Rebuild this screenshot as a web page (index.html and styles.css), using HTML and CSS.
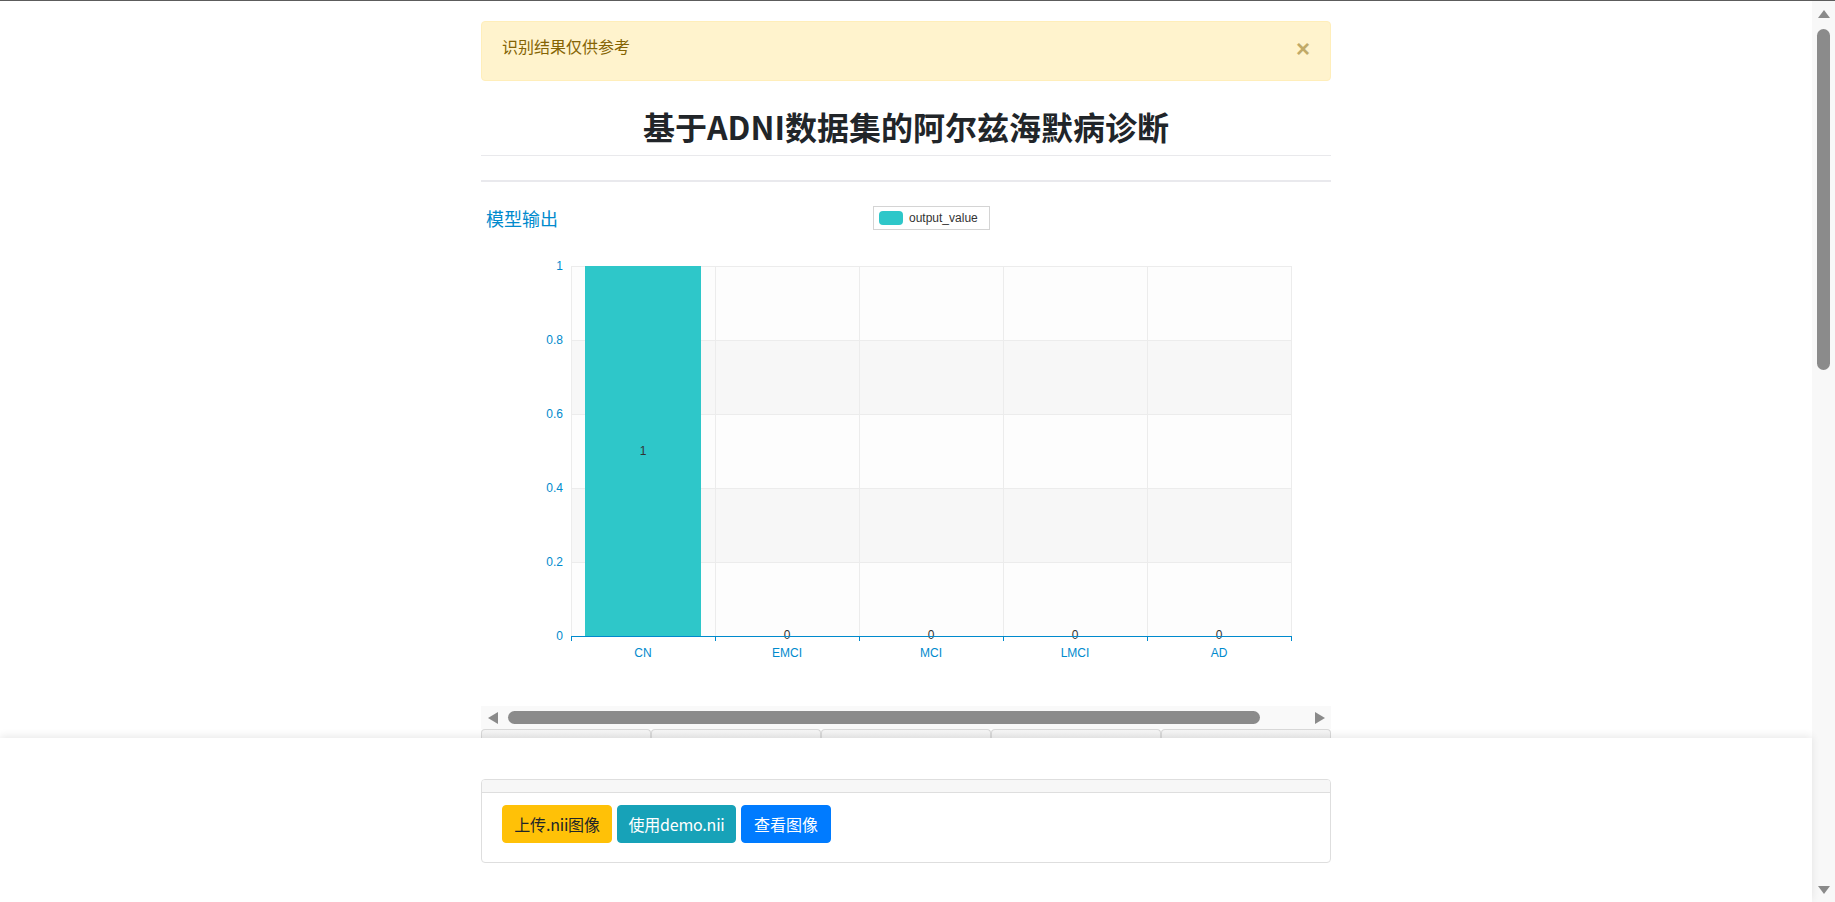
FILE: index.html
```html
<!DOCTYPE html>
<html lang="zh-CN">
<head>
<meta charset="utf-8">
<title>基于ADNI数据集的阿尔兹海默病诊断</title>
<link rel="stylesheet" href="styles.css">
</head>
<body>
<div class="viewport">
  <main class="page">
    <div class="container">
      <div class="alert">
        <span class="alert-text">识别结果仅供参考</span>
        <button class="close" type="button">×</button>
      </div>
      <h2 class="title">基于ADNI数据集的阿尔兹海默病诊断</h2>
      <hr class="rule">
      <div class="chart">
        <svg class="chart-svg" width="850" height="524" viewBox="0 0 850 524" xmlns="http://www.w3.org/2000/svg">
          <text class="c-title" x="5" y="36">模型输出</text>
          <rect x="392.5" y="24.5" width="116" height="23" fill="#fff" stroke="#d4d4d4"/>
          <rect x="398" y="29" width="24" height="14" rx="4" fill="#2ec7c9"/>
          <text class="c-legend" x="428" y="36">output_value</text>

          <rect x="90" y="84" width="720" height="74" fill="#fdfdfd"/>
          <rect x="90" y="158" width="720" height="74" fill="#f7f7f7"/>
          <rect x="90" y="232" width="720" height="74" fill="#fdfdfd"/>
          <rect x="90" y="306" width="720" height="74" fill="#f7f7f7"/>
          <rect x="90" y="380" width="720" height="74" fill="#fdfdfd"/>

          <g stroke="#ececec" stroke-width="1">
            <line x1="90" y1="84.5" x2="810" y2="84.5"/>
            <line x1="90" y1="158.5" x2="810" y2="158.5"/>
            <line x1="90" y1="232.5" x2="810" y2="232.5"/>
            <line x1="90" y1="306.5" x2="810" y2="306.5"/>
            <line x1="90" y1="380.5" x2="810" y2="380.5"/>
            <line x1="90.5" y1="84" x2="90.5" y2="454"/>
            <line x1="234.5" y1="84" x2="234.5" y2="454"/>
            <line x1="378.5" y1="84" x2="378.5" y2="454"/>
            <line x1="522.5" y1="84" x2="522.5" y2="454"/>
            <line x1="666.5" y1="84" x2="666.5" y2="454"/>
            <line x1="810.5" y1="84" x2="810.5" y2="454"/>
          </g>

          <rect x="104" y="84" width="116" height="370" fill="#2ec7c9"/>
          <text class="c-value" x="162" y="269">1</text>
          <text class="c-value" x="306" y="452.5">0</text>
          <text class="c-value" x="450" y="452.5">0</text>
          <text class="c-value" x="594" y="452.5">0</text>
          <text class="c-value" x="738" y="452.5">0</text>

          <g stroke="#008acd" stroke-width="1">
            <line x1="90" y1="454.5" x2="811" y2="454.5"/>
            <line x1="90.5" y1="454" x2="90.5" y2="459"/>
            <line x1="234.5" y1="454" x2="234.5" y2="459"/>
            <line x1="378.5" y1="454" x2="378.5" y2="459"/>
            <line x1="522.5" y1="454" x2="522.5" y2="459"/>
            <line x1="666.5" y1="454" x2="666.5" y2="459"/>
            <line x1="810.5" y1="454" x2="810.5" y2="459"/>
          </g>

          <text class="c-ylab" x="82" y="84">1</text>
          <text class="c-ylab" x="82" y="158">0.8</text>
          <text class="c-ylab" x="82" y="232">0.6</text>
          <text class="c-ylab" x="82" y="306">0.4</text>
          <text class="c-ylab" x="82" y="380">0.2</text>
          <text class="c-ylab" x="82" y="454">0</text>

          <text class="c-xlab" x="162" y="466">CN</text>
          <text class="c-xlab" x="306" y="466">EMCI</text>
          <text class="c-xlab" x="450" y="466">MCI</text>
          <text class="c-xlab" x="594" y="466">LMCI</text>
          <text class="c-xlab" x="738" y="466">AD</text>
        </svg>
      </div>
      <div class="hscroll">
        <span class="h-arrow h-left"></span>
        <span class="h-thumb"></span>
        <span class="h-space"></span>
        <span class="h-arrow h-right"></span>
      </div>
      <div class="tabs">
        <div class="tab"></div>
        <div class="tab"></div>
        <div class="tab"></div>
        <div class="tab"></div>
        <div class="tab"></div>
      </div>
    </div>

    <footer class="dock">
      <div class="card">
        <div class="card-header"></div>
        <div class="card-body">
          <button class="btn btn-warning" type="button">上传.nii图像</button>
          <button class="btn btn-info" type="button">使用demo.nii</button>
          <button class="btn btn-primary" type="button">查看图像</button>
        </div>
      </div>
    </footer>
  </main>
  <aside class="vscroll">
    <span class="v-arrow v-up"></span>
    <span class="v-thumb"></span>
    <span class="v-space"></span>
    <span class="v-arrow v-down"></span>
  </aside>
</div>
</body>
</html>
```

FILE: styles.css
```css
* {
  box-sizing: border-box;
}

html, body {
  margin: 0;
  height: 100%;
  overflow: hidden;
}

body {
  border-top: 1px solid #5c5c5c;
  background: #ffffff;
  font-family: "Noto Sans CJK SC", "Noto Sans", sans-serif;
  font-size: 16px;
  line-height: 1.5;
  color: #212529;
}

.viewport {
  display: flex;
  height: 100%;
}

.page {
  flex: 1;
  min-width: 0;
  overflow: hidden;
}

.container {
  width: 850px;
  margin: 0 auto;
  padding-top: 20px;
}

/* alert */
.alert {
  display: flex;
  justify-content: space-between;
  align-items: flex-start;
  height: 60px;
  padding: 12px 20px 22px;
  background: #fff3cd;
  border: 1px solid #ffeeba;
  border-radius: 4px;
  color: #856404;
}

.alert-text {
  line-height: 24px;
}

.close {
  margin-top: 3px;
  padding: 0;
  border: 0;
  background: none;
  font-family: "Liberation Sans", Arial, sans-serif;
  font-size: 24px;
  font-weight: 700;
  line-height: 1;
  color: #856404;
  opacity: 0.5;
}

/* title */
.title {
  margin: 25px 0 0;
  padding-bottom: 9px;
  border-bottom: 1px solid #e9e9ec;
  font-size: 32px;
  line-height: 40px;
  font-weight: 700;
  text-align: center;
  color: #212529;
}

.rule {
  margin: 24px 0 0;
  border: 0;
  border-top: 2px solid #e9e9ed;
  height: 0;
}

/* chart */
.chart {
  height: 524px;
}

.chart-svg {
  display: block;
}

.c-title {
  font-family: "Noto Sans CJK SC", sans-serif;
  font-size: 18px;
  fill: #008acd;
  dominant-baseline: central;
}

.c-legend {
  font-family: "Liberation Sans", Arial, sans-serif;
  font-size: 12px;
  fill: #333333;
  dominant-baseline: central;
}

.c-value {
  font-family: "Liberation Sans", Arial, sans-serif;
  font-size: 12px;
  fill: #333333;
  text-anchor: middle;
  dominant-baseline: central;
}

.c-ylab {
  font-family: "Liberation Sans", Arial, sans-serif;
  font-size: 12px;
  fill: #008acd;
  text-anchor: end;
  dominant-baseline: central;
}

.c-xlab {
  font-family: "Liberation Sans", Arial, sans-serif;
  font-size: 12px;
  fill: #008acd;
  text-anchor: middle;
  dominant-baseline: hanging;
}

/* horizontal scrollbar under the chart */
.hscroll {
  display: flex;
  align-items: center;
  height: 23px;
  background: #f9f9f9;
}

.h-arrow {
  width: 0;
  height: 0;
  border-top: 6.5px solid transparent;
  border-bottom: 6.5px solid transparent;
}

.h-left {
  margin-left: 7px;
  border-right: 10px solid #8a8a8a;
}

.h-right {
  margin-right: 6px;
  border-left: 10px solid #8a8a8a;
}

.h-thumb {
  margin-left: 10px;
  width: 752px;
  height: 13px;
  border-radius: 7px;
  background: #8b8b8b;
}

.h-space {
  flex: 1;
}

/* tabs */
.tabs {
  display: flex;
}

.tab {
  flex: 1;
  height: 32px;
  border: 1px solid #d9d9d9;
  border-bottom: 0;
  border-radius: 4px 4px 0 0;
  background: linear-gradient(#f6f6f6, #e2e2e2);
}

/* docked bottom panel */
.dock {
  position: fixed;
  left: 0;
  right: 23px;
  bottom: 0;
  height: 164px;
  padding-top: 41px;
  background: #ffffff;
  box-shadow: 0 -2px 8px rgba(0, 0, 0, 0.09);
}

.card {
  width: 850px;
  margin: 0 auto;
  border: 1px solid #dedede;
  border-radius: 4px;
  background: #ffffff;
}

.card-header {
  height: 13px;
  background: #f7f7f7;
  border-bottom: 1px solid #dedede;
  border-radius: 3px 3px 0 0;
}

.card-body {
  display: flex;
  gap: 5px;
  padding: 12px 20px 19px;
}

.btn {
  padding: 6px 0;
  border: 1px solid transparent;
  border-radius: 4px;
  font-family: "Noto Sans CJK SC", "Noto Sans", sans-serif;
  font-size: 16px;
  line-height: 24px;
  text-align: center;
  white-space: nowrap;
  letter-spacing: -0.2px;
  cursor: pointer;
}

.btn-warning {
  width: 110px;
  background: #ffc107;
  border-color: #ffc107;
  color: #212529;
}

.btn-info {
  width: 119px;
  background: #17a2b8;
  border-color: #17a2b8;
  color: #ffffff;
}

.btn-primary {
  width: 90px;
  background: #007bff;
  border-color: #007bff;
  color: #ffffff;
  letter-spacing: 0;
}

/* page scrollbar */
.vscroll {
  display: flex;
  flex-direction: column;
  align-items: center;
  width: 23px;
  background: #f8f8f8;
}

.v-arrow {
  width: 0;
  height: 0;
  border-left: 6px solid transparent;
  border-right: 6px solid transparent;
}

.v-up {
  margin-top: 9px;
  border-bottom: 8px solid #8a8a8a;
}

.v-down {
  margin-bottom: 8px;
  border-top: 8px solid #8a8a8a;
}

.v-thumb {
  margin-top: 11px;
  width: 13px;
  height: 341px;
  border-radius: 7px;
  background: #8b8b8b;
}

.v-space {
  flex: 1;
}
```
